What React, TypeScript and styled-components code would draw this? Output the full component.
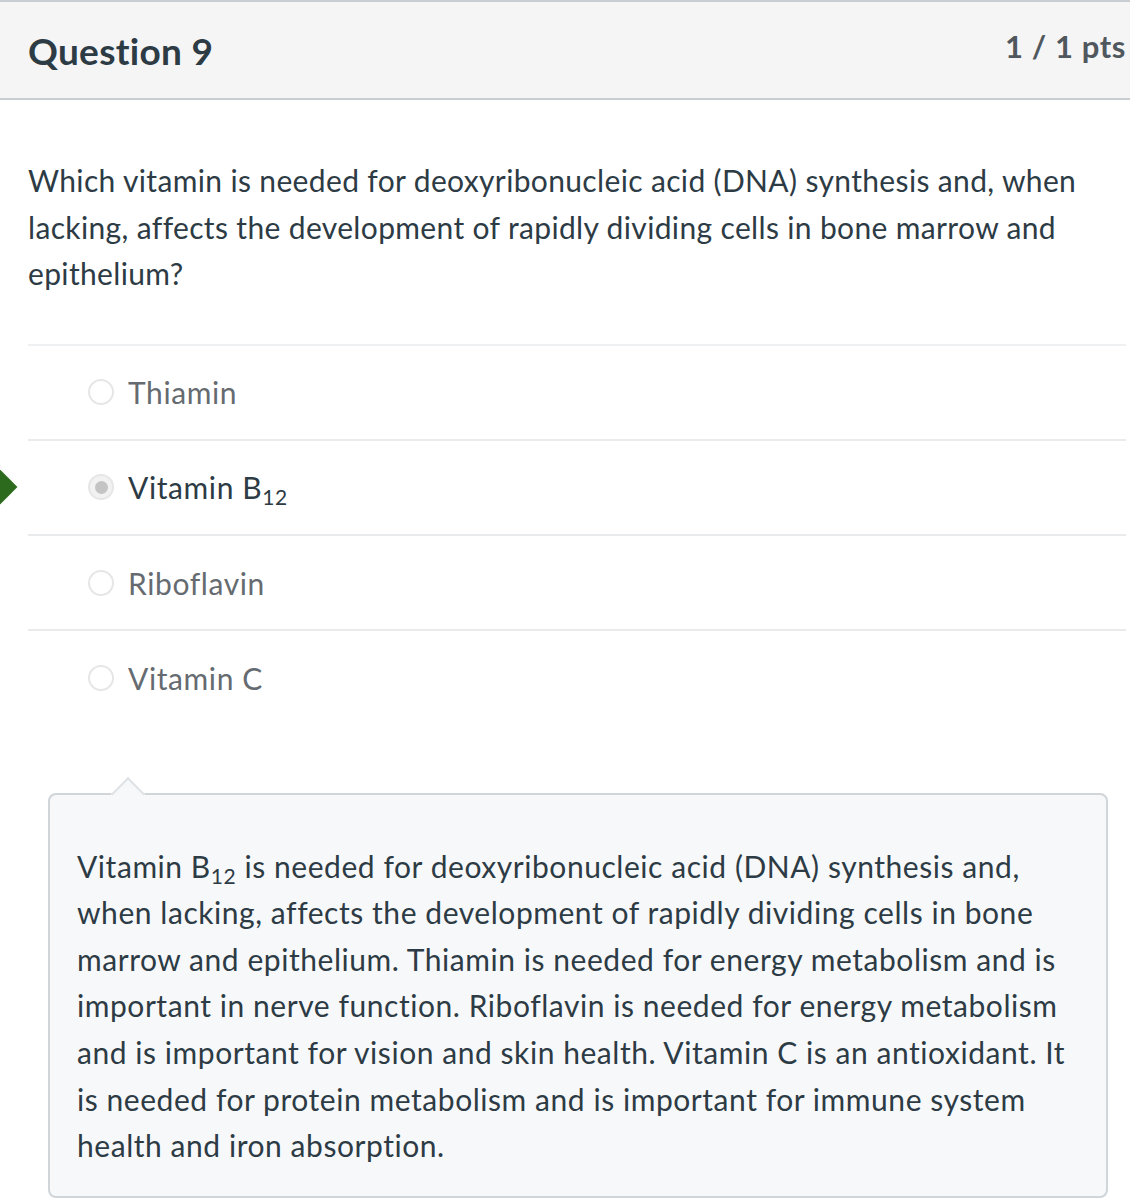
import React from 'react';
import styled, {createGlobalStyle} from 'styled-components';

const GlobalStyle = createGlobalStyle`
  html, body {
    margin: 0;
    padding: 0;
    background: #fff;
  }
  body {
    font-family: Lato, "Open Sans", "Liberation Sans", sans-serif;
    color: #2d3b45;
  }
`;

interface Answer {
  label: React.ReactNode;
  selected?: boolean;
}

const answers: Answer[] = [
  {label: 'Thiamin'},
  {
    label: (
      <>
        Vitamin B<sub>12</sub>
      </>
    ),
    selected: true,
  },
  {label: 'Riboflavin'},
  {label: 'Vitamin C'},
];

const App = () => {
  return (
    <>
      <GlobalStyle />
      <Page>
        <Header>
          <Title>Question 9</Title>
          <Points>1 / 1 pts</Points>
        </Header>
        <Body>
          <QuestionText>
            Which vitamin is needed for deoxyribonucleic acid (DNA) synthesis and, when
            lacking, affects the development of rapidly dividing cells in bone marrow and
            epithelium?
          </QuestionText>
          <AnswerList>
            {answers.map((a, i) => (
              <AnswerRow key={i} $last={i === answers.length - 1}>
                {a.selected && <CorrectArrow />}
                <Radio $selected={!!a.selected} />
                <AnswerLabel $selected={!!a.selected}>{a.label}</AnswerLabel>
              </AnswerRow>
            ))}
          </AnswerList>
          <Feedback>
            <p>
              Vitamin B<sub>12</sub> is needed for deoxyribonucleic acid (DNA) synthesis and,
              when lacking, affects the development of rapidly dividing cells in bone
              marrow and epithelium. Thiamin is needed for energy metabolism and is
              important in nerve function. Riboflavin is needed for energy metabolism
              and is important for vision and skin health. Vitamin C is an antioxidant. It
              is needed for protein metabolism and is important for immune system
              health and iron absorption.
            </p>
          </Feedback>
        </Body>
      </Page>
    </>
  );
};

const Page = styled.div`
  width: 1130px;
  height: 1200px;
  overflow: hidden;
`;

const Header = styled.div`
  height: 96px;
  background: #f5f5f5;
  border-top: 2px solid #c7cdd1;
  border-bottom: 2px solid #c7cdd1;
  display: flex;
  justify-content: space-between;
  align-items: flex-start;
  padding: 0 4px 0 28px;
`;

const Title = styled.h2`
  margin: 27px 0 0;
  font-size: 37px;
  font-weight: 700;
  line-height: 44px;
  letter-spacing: 0.3px;
  color: #2d3b45;
`;

const Points = styled.div`
  margin-top: 24px;
  font-size: 31px;
  font-weight: 700;
  line-height: 40px;
  letter-spacing: 0.6px;
  color: #50585e;
`;

const Body = styled.div`
  padding: 0 4px 0 28px;
`;

const QuestionText = styled.p`
  margin: 57px 0 0;
  font-size: 30px;
  line-height: 46.5px;
  letter-spacing: 0.35px;
  color: #2d3b45;
  width: 1090px;
`;

const AnswerList = styled.div`
  margin-top: 47px;
  border-top: 2px solid #eef0f1;
`;

const AnswerRow = styled.div<{$last: boolean}>`
  position: relative;
  height: 93.3px;
  display: flex;
  align-items: center;
  padding-left: 60px;
  border-bottom: 2px solid ${(p) => (p.$last ? 'transparent' : '#e8eaec')};
`;

const CorrectArrow = styled.span`
  position: absolute;
  left: -54px;
  top: 50%;
  width: 36px;
  height: 36px;
  background: #2c6a1e;
  transform: translateY(-50%) rotate(45deg);
`;

const Radio = styled.span<{$selected: boolean}>`
  width: 22px;
  height: 22px;
  border-radius: 50%;
  border: 2px solid #e6e6e6;
  background: ${(p) => (p.$selected ? '#f2f2f2' : '#fff')};
  display: flex;
  align-items: center;
  justify-content: center;
  flex-shrink: 0;
  &::after {
    content: '';
    display: ${(p) => (p.$selected ? 'block' : 'none')};
    width: 13px;
    height: 13px;
    border-radius: 50%;
    background: #c4c4c4;
  }
`;

const AnswerLabel = styled.span<{$selected: boolean}>`
  margin-left: 14px;
  font-size: 30px;
  line-height: 40px;
  letter-spacing: 0.6px;
  color: ${(p) => (p.$selected ? '#2d3b45' : '#656b70')};
  sub {
    font-size: 21px;
    vertical-align: -6px;
    line-height: 0;
  }
`;

const Feedback = styled.div`
  position: relative;
  margin: 66px 0 0 20px;
  width: 1060px;
  height: 405px;
  box-sizing: border-box;
  background: #f7f8fa;
  border: 2px solid #cfd5d9;
  border-radius: 8px;
  padding: 48px 40px 0 27px;
  &::before {
    content: '';
    position: absolute;
    top: -13px;
    left: 66px;
    width: 22px;
    height: 22px;
    background: #f7f8fa;
    border-left: 2px solid #dfe3e6;
    border-top: 2px solid #dfe3e6;
    transform: rotate(45deg);
  }
  p {
    margin: 0;
    font-size: 30px;
    line-height: 46.6px;
    letter-spacing: 0.55px;
    color: #2d3b45;
  }
  sub {
    font-size: 21px;
    vertical-align: -6px;
    line-height: 0;
  }
`;

export default App;
